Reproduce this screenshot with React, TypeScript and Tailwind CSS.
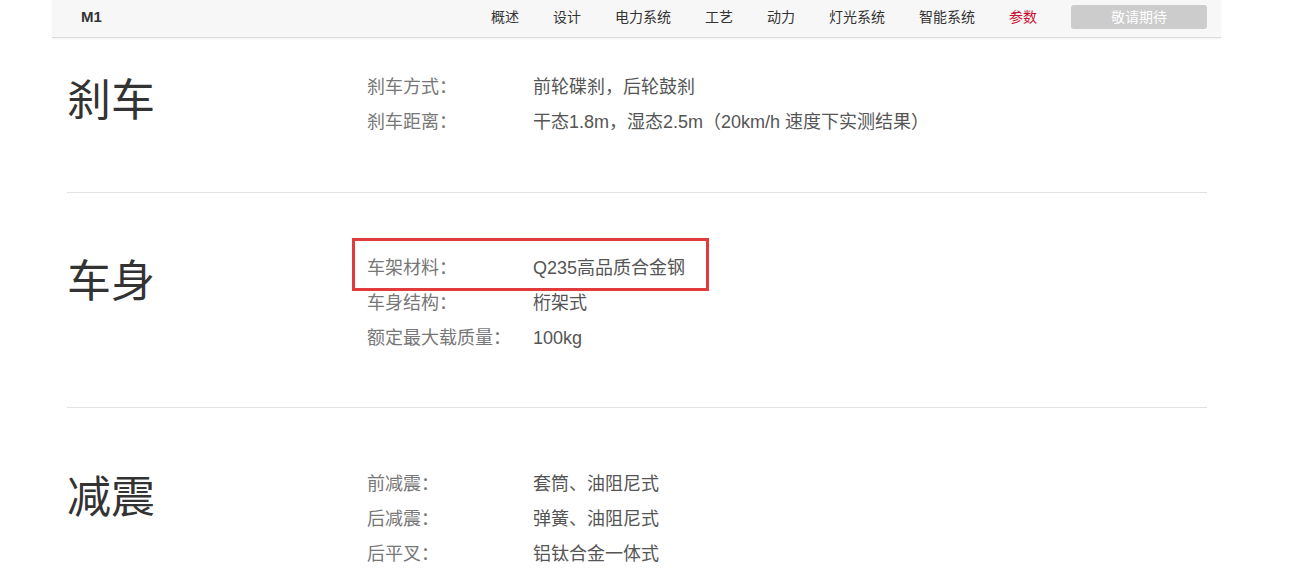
import React from "react";

const font = { fontFamily: '"Liberation Sans", "Noto Sans CJK SC", sans-serif' };

type Row = { k: string; v: string; mark?: boolean };
type Section = { title: string; rows: Row[] };

const sections: Section[] = [
  {
    title: "刹车",
    rows: [
      { k: "刹车方式：", v: "前轮碟刹，后轮鼓刹" },
      { k: "刹车距离：", v: "干态1.8m，湿态2.5m（20km/h 速度下实测结果）" },
    ],
  },
  {
    title: "车身",
    rows: [
      { k: "车架材料：", v: "Q235高品质合金钢", mark: true },
      { k: "车身结构：", v: "桁架式" },
      { k: "额定最大载质量：", v: "100kg" },
    ],
  },
  {
    title: "减震",
    rows: [
      { k: "前减震：", v: "套筒、油阻尼式" },
      { k: "后减震：", v: "弹簧、油阻尼式" },
      { k: "后平叉：", v: "铝钛合金一体式" },
    ],
  },
];

const nav = ["概述", "设计", "电力系统", "工艺", "动力", "灯光系统", "智能系统"];

export default function App() {
  return (
    <div className="w-[1293px] h-[570px] overflow-hidden bg-white" style={font}>
      <div className="ml-[52px] w-[1169px] h-[38px] bg-[#f7f7f7] border-b border-[#dcdcdc] shadow-[0_1px_2px_rgba(0,0,0,0.06)] flex items-center pl-[29px] pr-[14px]">
        <div className="text-[15px] font-bold text-[#333] leading-none -mt-[4px]">M1</div>
        <div className="ml-auto flex items-center gap-[34px] -mt-[3px]">
          {nav.map((n) => (
            <span key={n} className="text-[14px] text-[#333] leading-none">{n}</span>
          ))}
          <span className="text-[14px] text-[#c8102e] leading-none">参数</span>
          <div className="w-[136px] h-[24px] rounded-[3px] bg-[#cccccc] text-white text-[14px] flex items-center justify-center">敬请期待</div>
        </div>
      </div>
      <div className="ml-[67px] w-[1140px]">
        {sections.map((s, i) => (
          <div
            key={s.title}
            className={
              "flex " +
              (i === 0 ? "pt-[32px] pb-[52px] border-b border-[#e2e2e2]" : "") +
              (i === 1 ? "pt-[58px] pb-[51px] border-b border-[#e2e2e2]" : "") +
              (i === 2 ? "pt-[59px] pb-[40px]" : "")
            }
          >
            <div className="w-[300px] text-[44px] leading-[53px] text-[#333] mt-[4px]">{s.title}</div>
            <div className="flex flex-col">
              {s.rows.map((r) => (
                <div key={r.k} className="relative flex h-[35px] items-center text-[18px]">
                  {r.mark && (
                    <div className="absolute left-[-15px] top-[-13px] w-[357px] h-[53px] border-[3px] border-[#e23b3b] pointer-events-none" />
                  )}
                  <span className="w-[166px] text-[#777]">{r.k}</span>
                  <span className="text-[#555]">{r.v}</span>
                </div>
              ))}
            </div>
          </div>
        ))}
      </div>
    </div>
  );
}
